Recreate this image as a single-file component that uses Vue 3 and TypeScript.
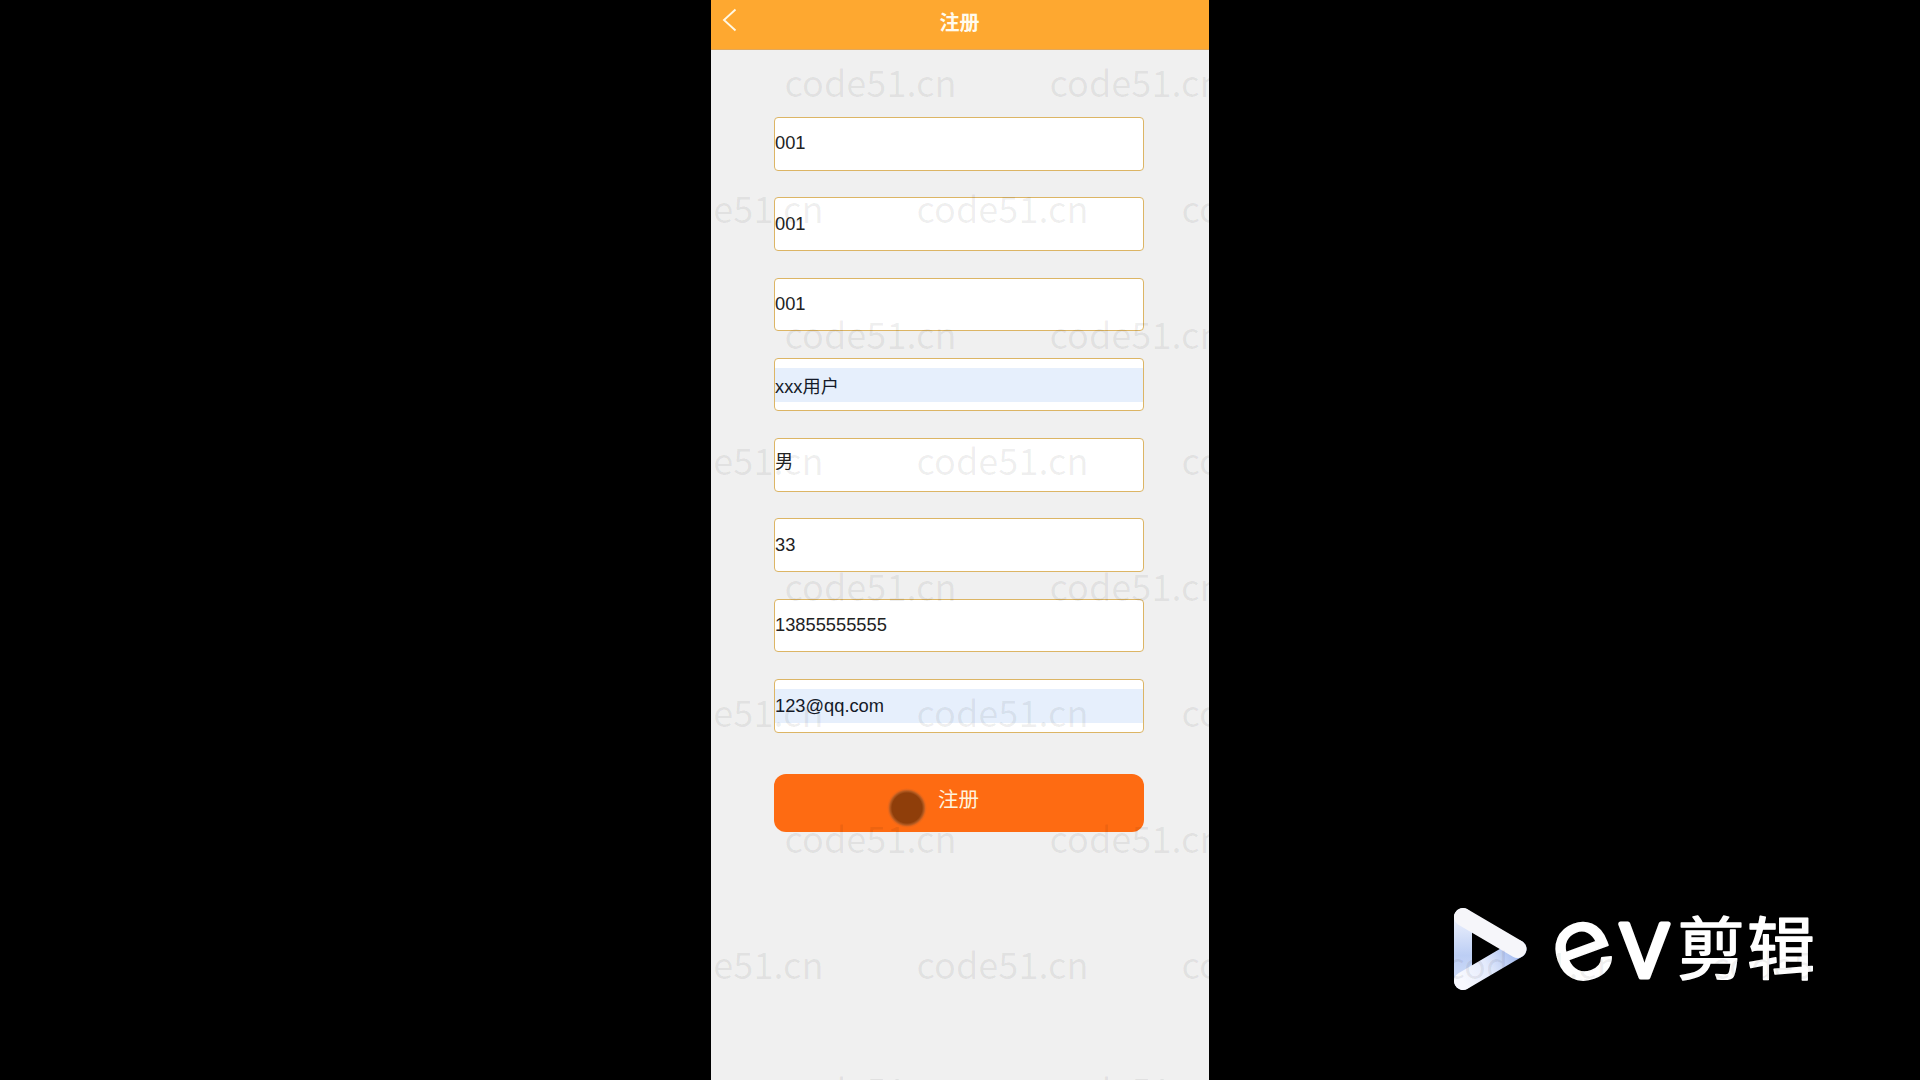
<script setup lang="ts">
import { ref } from 'vue'

interface Field {
  name: string
  value: string
  kind: 'text' | 'autofill' | 'picker'
}

const fields = ref<Field[]>([
  { name: 'account', value: '001', kind: 'text' },
  { name: 'password', value: '001', kind: 'text' },
  { name: 'confirm', value: '001', kind: 'text' },
  { name: 'username', value: 'xxx用户', kind: 'autofill' },
  { name: 'gender', value: '男', kind: 'picker' },
  { name: 'age', value: '33', kind: 'text' },
  { name: 'phone', value: '13855555555', kind: 'text' },
  { name: 'email', value: '123@qq.com', kind: 'autofill' },
])

// Staggered watermark grid: every other row is shifted by half a column.
const marks: { x: number; y: number }[] = []
for (let row = 0; row < 9; row++) {
  const start = row % 2 === 0 ? 784.5 : 651.5
  for (let col = 0; col < 5; col++) {
    const x = start + col * 265
    if (x < 1740) marks.push({ x, y: 97 + row * 126 })
  }
}
</script>

<template>
  <div class="stage">
    <main class="phone">
      <header class="bar">
        <svg class="back" width="16" height="24" viewBox="0 0 16 24">
          <path d="M13.5 1.5 2 12l11.500 10.500" fill="none" stroke="#fff8e4" stroke-width="1.900" />
        </svg>
        <h1 class="title">注册</h1>
      </header>
      <form class="form" @submit.prevent>
        <div v-for="f in fields" :key="f.name" class="field">
          <input v-model="f.value" :class="['input', f.kind]" type="text" />
        </div>
        <button class="submit" type="submit">注册</button>
      </form>
    </main>

    <svg class="logo" width="380" height="100" viewBox="1444 900 380 100">
      <defs>
        <linearGradient id="side" gradientUnits="userSpaceOnUse" x1="0" y1="917" x2="0" y2="981">
          <stop offset="0" stop-color="#edf1fd" />
          <stop offset="0.6" stop-color="#bccef4" />
          <stop offset="1" stop-color="#cfdcf8" />
        </linearGradient>
        <linearGradient id="base" gradientUnits="userSpaceOnUse" x1="1463" y1="981" x2="1512" y2="952">
          <stop offset="0" stop-color="#f8f9ff" />
          <stop offset="0.5" stop-color="#e3eafc" />
          <stop offset="1" stop-color="#a9bff0" />
        </linearGradient>
      </defs>
      <g fill="none" stroke-width="18" stroke-linecap="round">
        <path d="M1463 917v64" stroke="url(#side)" />
        <path d="M1463 981l54.500-32" stroke="url(#base)" />
        <path d="M1463 917l54.500 32" stroke="#f6f6fa" />
      </g>
      <g class="brand">
        <text class="latin" text-anchor="middle" transform="translate(1583 951) rotate(-20) scale(1.05 1)" x="-0.500" y="28">e</text>
        <text class="latin vee" x="1644.500" y="977" text-anchor="middle">v</text>
        <text class="han" x="1677" y="973.500" textLength="138">剪辑</text>
      </g>
    </svg>

    <span class="touch"></span>

    <svg class="watermark" width="1920" height="1080">
      <text
        v-for="(m, i) in marks"
        :key="i"
        :x="m.x"
        :y="m.y"
        textLength="172"
        lengthAdjust="spacingAndGlyphs"
      >code51.cn</text>
    </svg>
  </div>
</template>

<style>
body {
  margin: 0;
  background: #000;
}
</style>

<style scoped>
.stage {
  position: relative;
  display: flex;
  justify-content: center;
  width: 1920px;
  height: 1080px;
  overflow: hidden;
  background: #000;
  font-family: "Liberation Sans", "Noto Sans CJK SC", sans-serif;
}
.phone {
  width: 498px;
  height: 1080px;
  background: #f0f0f0;
}
.bar {
  display: grid;
  grid-template-columns: 60px 1fr 60px;
  box-sizing: border-box;
  height: 50px;
  background: #fea830;
  border-bottom: 1px solid #e2a85c;
}
.back {
  margin: 8px 0 0 11px;
}
.title {
  margin: 0;
  color: #fffbee;
  font: 700 20px/43px "Noto Sans CJK SC", sans-serif;
  text-align: center;
  text-indent: -1px;
}
.form {
  display: flex;
  flex-direction: column;
  gap: 26.700px;
  width: 370px;
  margin: 67px 0 0 63px;
}
.field {
  display: flex;
  align-items: center;
  box-sizing: border-box;
  height: 53.600px;
  background: #fff;
  border: 1px solid #dcb565;
  border-radius: 4px;
}
.input {
  box-sizing: border-box;
  width: 100%;
  height: 34px;
  padding: 0;
  border: 0;
  outline: 0;
  background: transparent;
  color: #222;
  font: 18.300px "Liberation Sans", "Noto Sans CJK SC", sans-serif;
}
.text {
  padding-bottom: 1px;
}
.autofill {
  background: #e6effc;
  color: #141a28;
}
.picker {
  padding-bottom: 10px;
}
.submit {
  height: 58px;
  margin-top: 14.500px;
  padding: 0 0 9px;
  border: 0;
  border-radius: 12px;
  background: #fe6b12;
  color: #fff3dc;
  font: 400 20.500px "Noto Sans CJK SC", sans-serif;
  text-indent: -1px;
}
.logo {
  position: absolute;
  left: 1444px;
  top: 900px;
}
.brand {
  fill: #fff;
  stroke: #fff;
  stroke-width: 1.500px;
  stroke-linejoin: round;
}
.latin {
  font: 400 102px Inter, sans-serif;
}
.vee {
  font-size: 97px;
  font-weight: 300;
  stroke-width: 5px;
}
.han {
  font: 400 68px "Noto Sans CJK SC", sans-serif;
}
.touch {
  position: absolute;
  left: 887px;
  top: 788px;
  width: 40px;
  height: 40px;
  border-radius: 50%;
  background: radial-gradient(circle, #8f3e0a 0 15px, #b45a20 17px, rgba(220, 100, 30, 0.6) 18.500px, transparent 20px);
}
.watermark {
  position: absolute;
  inset: 0;
  pointer-events: none;
  fill: rgba(0, 0, 0, 0.068);
  font: 400 36px "Noto Sans CJK SC", sans-serif;
}
</style>
